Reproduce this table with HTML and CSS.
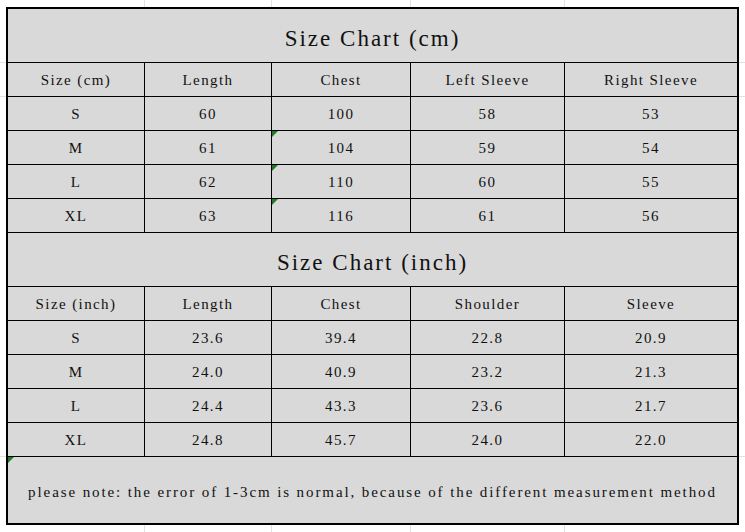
FILE: index.html
```html
<!DOCTYPE html>
<html>
<head>
<meta charset="utf-8">
<link rel="stylesheet" href="styles.css">
</head>
<body>
<div class="sheet">
  <div class="chart">
    <div class="cell title">Size Chart (cm)</div>
    <div class="cell">Size (cm)</div>
    <div class="cell">Length</div>
    <div class="cell">Chest</div>
    <div class="cell">Left Sleeve</div>
    <div class="cell">Right Sleeve</div>

    <div class="cell">S</div><div class="cell">60</div><div class="cell">100</div><div class="cell">58</div><div class="cell">53</div>
    <div class="cell">M</div><div class="cell">61</div><div class="cell flag">104</div><div class="cell">59</div><div class="cell">54</div>
    <div class="cell">L</div><div class="cell">62</div><div class="cell flag">110</div><div class="cell">60</div><div class="cell">55</div>
    <div class="cell">XL</div><div class="cell">63</div><div class="cell flag">116</div><div class="cell">61</div><div class="cell">56</div>

    <div class="cell title">Size Chart (inch)</div>
    <div class="cell">Size (inch)</div>
    <div class="cell">Length</div>
    <div class="cell">Chest</div>
    <div class="cell">Shoulder</div>
    <div class="cell">Sleeve</div>

    <div class="cell">S</div><div class="cell">23.6</div><div class="cell">39.4</div><div class="cell">22.8</div><div class="cell">20.9</div>
    <div class="cell">M</div><div class="cell">24.0</div><div class="cell">40.9</div><div class="cell">23.2</div><div class="cell">21.3</div>
    <div class="cell">L</div><div class="cell">24.4</div><div class="cell">43.3</div><div class="cell">23.6</div><div class="cell">21.7</div>
    <div class="cell">XL</div><div class="cell">24.8</div><div class="cell">45.7</div><div class="cell">24.0</div><div class="cell">22.0</div>

    <div class="cell note flag">please note: the error of 1-3cm is normal, because of the different measurement method</div>
  </div>
</div>
</body>
</html>
```

FILE: styles.css
```css
html, body {
  margin: 0;
  padding: 0;
}

body {
  width: 745px;
  height: 532px;
  overflow: hidden;
  background-color: #ffffff;
  background-image:
    linear-gradient(to right,
      transparent 144px, #e2e2e2 144px, #e2e2e2 145px,
      transparent 145px, transparent 271px, #e2e2e2 271px, #e2e2e2 272px,
      transparent 272px, transparent 410px, #e2e2e2 410px, #e2e2e2 411px,
      transparent 411px, transparent 564px, #e2e2e2 564px, #e2e2e2 565px,
      transparent 565px),
    linear-gradient(to bottom,
      transparent 62px, #e2e2e2 62px, #e2e2e2 63px,
      transparent 63px, transparent 96px, #e2e2e2 96px, #e2e2e2 97px,
      transparent 97px, transparent 456px, #e2e2e2 456px, #e2e2e2 457px,
      transparent 457px);
}

.sheet {
  padding: 7px 0 0 6px;
}

.chart {
  display: grid;
  width: 733px;
  box-sizing: border-box;
  grid-template-columns: 136px 126px 138px 153px 172px;
  grid-template-rows: 53px repeat(5, 33px) 53px repeat(5, 33px) 66px;
  gap: 1px;
  padding: 2px;
  background: #000;
  font-family: "Liberation Serif", "DejaVu Serif", serif;
  font-size: 15px;
  letter-spacing: 1.4px;
  color: #111;
}

.cell {
  position: relative;
  background: #d9d9d9;
  display: flex;
  align-items: center;
  justify-content: center;
  padding-top: 2px;
  white-space: nowrap;
}

.title {
  grid-column: 1 / -1;
  font-size: 23px;
  letter-spacing: 2px;
  padding-top: 6px;
}

.note {
  grid-column: 1 / -1;
  padding-top: 4px;
  letter-spacing: 1.9px;
}

.flag::before {
  content: "";
  position: absolute;
  top: 0;
  left: 0;
  width: 0;
  height: 0;
  border-top: 6px solid #1f7a2a;
  border-right: 6px solid transparent;
}
```
